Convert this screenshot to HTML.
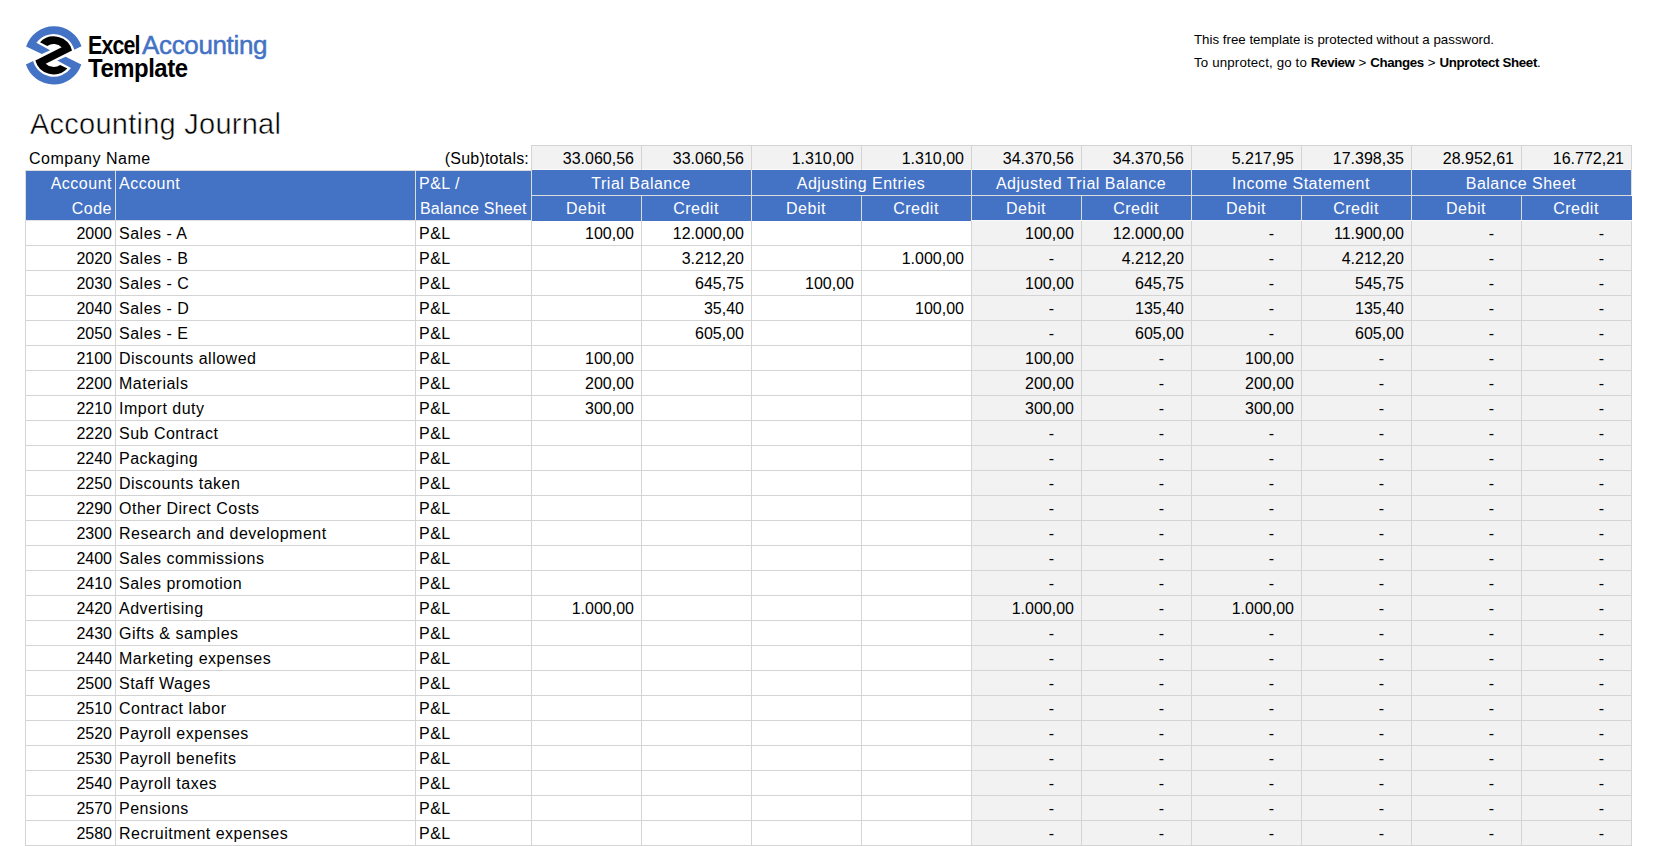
<!DOCTYPE html>
<html><head><meta charset="utf-8"><style>
html,body{margin:0;padding:0;background:#fff;width:1657px;height:846px;overflow:hidden;position:relative}
.b{position:absolute}
.t{position:absolute;font-family:"Liberation Sans", sans-serif;font-size:16px;line-height:25px;height:25px;white-space:nowrap;color:#000;letter-spacing:0.5px}
.n{letter-spacing:0}
.w{color:#fff}
.title{position:absolute;font-family:"Liberation Sans", sans-serif;font-size:29px;line-height:34px;white-space:nowrap;color:#000;letter-spacing:0.25px;-webkit-text-stroke:0.5px #fff}
.note{position:absolute;font-family:"Liberation Sans", sans-serif;font-size:13.3px;line-height:20px;white-space:nowrap;color:#000}
.note b{letter-spacing:-0.35px}
.logo{position:absolute;font-family:"Liberation Sans", sans-serif;white-space:nowrap}
</style></head><body>
<svg style="position:absolute;left:0;top:0" width="100" height="100" viewBox="-53.7 -55.4 100 100">
  <path fill="#4472c4" d="M-27.6,-9.0 A29.2,29.2 0 0 1 27.8,-9.2 L20.6,-5.6 A21.4,21.4 0 0 0 -17.3,-12.6 L-3.6,-5.2 L-11.9,-1.4 Z"/>
  <path fill="#4472c4" transform="rotate(180)" d="M-27.6,-9.0 A29.2,29.2 0 0 1 27.8,-9.2 L20.6,-5.6 A21.4,21.4 0 0 0 -17.3,-12.6 L-3.6,-5.2 L-11.9,-1.4 Z"/>
  <path fill="#000" d="M-13.67,-13.2 A19,19 0 0 1 18.33,-5.01 L-7.99,8.27 A11.5,11.5 0 0 0 6.46,9.51 L13.67,13.2 A19,19 0 0 1 -18.33,5.01 L7.99,-8.27 A11.5,11.5 0 0 0 -6.46,-9.51 Z"/>
</svg>
<div class="logo" style="left:88px;top:32px;font-size:26px;line-height:26px;font-weight:700;color:#000;letter-spacing:-1px;transform:scaleX(0.82);transform-origin:0 0">Excel</div>
<div class="logo" style="left:142px;top:32px;font-size:26px;line-height:26px;font-weight:400;color:#4472c4;letter-spacing:-0.35px;-webkit-text-stroke:0.5px #4472c4">Accounting</div>
<div class="logo" style="left:88px;top:55px;font-size:26px;line-height:26px;font-weight:700;color:#000;letter-spacing:-0.5px;transform:scaleX(0.92);transform-origin:0 0">Template</div>
<div class="title" style="left:30px;top:107px">Accounting Journal</div>
<div class="t" style="left:29px;top:146px">Company Name</div>
<div class="note" style="left:1194px;top:30px">This free template is protected without a password.</div>
<div class="note" style="left:1194px;top:53px;letter-spacing:0.15px">To unprotect, go to <b>Review</b> &gt; <b>Changes</b> &gt; <b>Unprotect Sheet</b>.</div>
<div class="b" style="left:531px;top:145px;width:1100px;height:24px;background:#f2f2f2"></div>
<div class="b" style="left:531px;top:169px;width:1100px;height:1px;background:#fafafa"></div>
<div class="b" style="left:971px;top:220px;width:660px;height:626px;background:#f2f2f2"></div>
<div class="b" style="left:25px;top:171px;width:506px;height:49px;background:#4472c4"></div>
<div class="b" style="left:25px;top:220px;width:506px;height:1px;background:#e2e2e2"></div>
<div class="b" style="left:531px;top:170px;width:440px;height:51px;background:#4472c4"></div>
<div class="b" style="left:971px;top:170px;width:660px;height:50px;background:#4472c4"></div>
<div class="b" style="left:971px;top:220px;width:660px;height:1px;background:#fafafa"></div>
<div class="b" style="left:25px;top:245px;width:1607px;height:1px;background:#d4d4d4"></div>
<div class="b" style="left:25px;top:270px;width:1607px;height:1px;background:#d4d4d4"></div>
<div class="b" style="left:25px;top:295px;width:1607px;height:1px;background:#d4d4d4"></div>
<div class="b" style="left:25px;top:320px;width:1607px;height:1px;background:#d4d4d4"></div>
<div class="b" style="left:25px;top:345px;width:1607px;height:1px;background:#d4d4d4"></div>
<div class="b" style="left:25px;top:370px;width:1607px;height:1px;background:#d4d4d4"></div>
<div class="b" style="left:25px;top:395px;width:1607px;height:1px;background:#d4d4d4"></div>
<div class="b" style="left:25px;top:420px;width:1607px;height:1px;background:#d4d4d4"></div>
<div class="b" style="left:25px;top:445px;width:1607px;height:1px;background:#d4d4d4"></div>
<div class="b" style="left:25px;top:470px;width:1607px;height:1px;background:#d4d4d4"></div>
<div class="b" style="left:25px;top:495px;width:1607px;height:1px;background:#d4d4d4"></div>
<div class="b" style="left:25px;top:520px;width:1607px;height:1px;background:#d4d4d4"></div>
<div class="b" style="left:25px;top:545px;width:1607px;height:1px;background:#d4d4d4"></div>
<div class="b" style="left:25px;top:570px;width:1607px;height:1px;background:#d4d4d4"></div>
<div class="b" style="left:25px;top:595px;width:1607px;height:1px;background:#d4d4d4"></div>
<div class="b" style="left:25px;top:620px;width:1607px;height:1px;background:#d4d4d4"></div>
<div class="b" style="left:25px;top:645px;width:1607px;height:1px;background:#d4d4d4"></div>
<div class="b" style="left:25px;top:670px;width:1607px;height:1px;background:#d4d4d4"></div>
<div class="b" style="left:25px;top:695px;width:1607px;height:1px;background:#d4d4d4"></div>
<div class="b" style="left:25px;top:720px;width:1607px;height:1px;background:#d4d4d4"></div>
<div class="b" style="left:25px;top:745px;width:1607px;height:1px;background:#d4d4d4"></div>
<div class="b" style="left:25px;top:770px;width:1607px;height:1px;background:#d4d4d4"></div>
<div class="b" style="left:25px;top:795px;width:1607px;height:1px;background:#d4d4d4"></div>
<div class="b" style="left:25px;top:820px;width:1607px;height:1px;background:#d4d4d4"></div>
<div class="b" style="left:25px;top:845px;width:1607px;height:1px;background:#d4d4d4"></div>
<div class="b" style="left:25px;top:220px;width:1px;height:626px;background:#d4d4d4"></div>
<div class="b" style="left:115px;top:220px;width:1px;height:626px;background:#d4d4d4"></div>
<div class="b" style="left:415px;top:220px;width:1px;height:626px;background:#d4d4d4"></div>
<div class="b" style="left:531px;top:220px;width:1px;height:626px;background:#d4d4d4"></div>
<div class="b" style="left:641px;top:220px;width:1px;height:626px;background:#d4d4d4"></div>
<div class="b" style="left:751px;top:220px;width:1px;height:626px;background:#d4d4d4"></div>
<div class="b" style="left:861px;top:220px;width:1px;height:626px;background:#d4d4d4"></div>
<div class="b" style="left:971px;top:221px;width:1px;height:626px;background:#d4d4d4"></div>
<div class="b" style="left:1081px;top:221px;width:1px;height:626px;background:#d4d4d4"></div>
<div class="b" style="left:1191px;top:221px;width:1px;height:626px;background:#d4d4d4"></div>
<div class="b" style="left:1301px;top:221px;width:1px;height:626px;background:#d4d4d4"></div>
<div class="b" style="left:1411px;top:221px;width:1px;height:626px;background:#d4d4d4"></div>
<div class="b" style="left:1521px;top:221px;width:1px;height:626px;background:#d4d4d4"></div>
<div class="b" style="left:1631px;top:221px;width:1px;height:626px;background:#d4d4d4"></div>
<div class="b" style="left:531px;top:145px;width:1101px;height:1px;background:#d4d4d4"></div>
<div class="b" style="left:531px;top:145px;width:1px;height:25px;background:#d4d4d4"></div>
<div class="b" style="left:641px;top:145px;width:1px;height:25px;background:#d4d4d4"></div>
<div class="b" style="left:751px;top:145px;width:1px;height:25px;background:#d4d4d4"></div>
<div class="b" style="left:861px;top:145px;width:1px;height:25px;background:#d4d4d4"></div>
<div class="b" style="left:971px;top:145px;width:1px;height:25px;background:#d4d4d4"></div>
<div class="b" style="left:1081px;top:145px;width:1px;height:25px;background:#d4d4d4"></div>
<div class="b" style="left:1191px;top:145px;width:1px;height:25px;background:#d4d4d4"></div>
<div class="b" style="left:1301px;top:145px;width:1px;height:25px;background:#d4d4d4"></div>
<div class="b" style="left:1411px;top:145px;width:1px;height:25px;background:#d4d4d4"></div>
<div class="b" style="left:1521px;top:145px;width:1px;height:25px;background:#d4d4d4"></div>
<div class="b" style="left:1631px;top:145px;width:1px;height:25px;background:#d4d4d4"></div>
<div class="b" style="left:115px;top:170px;width:1px;height:50px;background:#dcdcdc"></div>
<div class="b" style="left:415px;top:170px;width:1px;height:50px;background:#dcdcdc"></div>
<div class="b" style="left:531px;top:170px;width:1px;height:50px;background:#dcdcdc"></div>
<div class="b" style="left:751px;top:170px;width:1px;height:50px;background:#dcdcdc"></div>
<div class="b" style="left:971px;top:170px;width:1px;height:50px;background:#dcdcdc"></div>
<div class="b" style="left:1191px;top:170px;width:1px;height:50px;background:#dcdcdc"></div>
<div class="b" style="left:1411px;top:170px;width:1px;height:50px;background:#dcdcdc"></div>
<div class="b" style="left:641px;top:196px;width:1px;height:24px;background:#dcdcdc"></div>
<div class="b" style="left:861px;top:196px;width:1px;height:24px;background:#dcdcdc"></div>
<div class="b" style="left:1081px;top:196px;width:1px;height:24px;background:#dcdcdc"></div>
<div class="b" style="left:1301px;top:196px;width:1px;height:24px;background:#dcdcdc"></div>
<div class="b" style="left:1521px;top:196px;width:1px;height:24px;background:#dcdcdc"></div>
<div class="b" style="left:531px;top:195px;width:1100px;height:1px;background:#dcdcdc"></div>
<div class="b" style="left:25px;top:170px;width:506px;height:1px;background:#dcdcdc"></div>
<div class="b" style="left:1631px;top:170px;width:1px;height:25px;background:#dcdcdc"></div>
<div class="b" style="left:1631px;top:196px;width:1px;height:24px;background:#4472c4"></div>
<div class="b" style="left:25px;top:170px;width:1px;height:51px;background:#dcdcdc"></div>
<div class="t" style="left:415px;top:146px;width:114px;text-align:right;letter-spacing:0.2px">(Sub)totals:</div>
<div class="t n g" style="left:531px;top:146px;width:103px;text-align:right;">33.060,56</div>
<div class="t n g" style="left:641px;top:146px;width:103px;text-align:right;">33.060,56</div>
<div class="t n g" style="left:751px;top:146px;width:103px;text-align:right;">1.310,00</div>
<div class="t n g" style="left:861px;top:146px;width:103px;text-align:right;">1.310,00</div>
<div class="t n g" style="left:971px;top:146px;width:103px;text-align:right;">34.370,56</div>
<div class="t n g" style="left:1081px;top:146px;width:103px;text-align:right;">34.370,56</div>
<div class="t n g" style="left:1191px;top:146px;width:103px;text-align:right;">5.217,95</div>
<div class="t n g" style="left:1301px;top:146px;width:103px;text-align:right;">17.398,35</div>
<div class="t n g" style="left:1411px;top:146px;width:103px;text-align:right;">28.952,61</div>
<div class="t n g" style="left:1521px;top:146px;width:103px;text-align:right;">16.772,21</div>
<div class="t w" style="left:25px;top:171px;width:87px;text-align:right;">Account</div>
<div class="t w" style="left:25px;top:196px;width:87px;text-align:right;">Code</div>
<div class="t w" style="left:119px;top:171px;width:290px;text-align:left;">Account</div>
<div class="t w" style="left:419px;top:171px;width:110px;text-align:left;">P&amp;L /</div>
<div class="t w" style="left:420px;top:196px;width:112px;text-align:left;letter-spacing:0.2px">Balance Sheet</div>
<div class="t w" style="left:531px;top:171px;width:220px;text-align:center;">Trial Balance</div>
<div class="t w" style="left:531px;top:196px;width:110px;text-align:center;">Debit</div>
<div class="t w" style="left:641px;top:196px;width:110px;text-align:center;">Credit</div>
<div class="t w" style="left:751px;top:171px;width:220px;text-align:center;">Adjusting Entries</div>
<div class="t w" style="left:751px;top:196px;width:110px;text-align:center;">Debit</div>
<div class="t w" style="left:861px;top:196px;width:110px;text-align:center;">Credit</div>
<div class="t w" style="left:971px;top:171px;width:220px;text-align:center;">Adjusted Trial Balance</div>
<div class="t w" style="left:971px;top:196px;width:110px;text-align:center;">Debit</div>
<div class="t w" style="left:1081px;top:196px;width:110px;text-align:center;">Credit</div>
<div class="t w" style="left:1191px;top:171px;width:220px;text-align:center;">Income Statement</div>
<div class="t w" style="left:1191px;top:196px;width:110px;text-align:center;">Debit</div>
<div class="t w" style="left:1301px;top:196px;width:110px;text-align:center;">Credit</div>
<div class="t w" style="left:1411px;top:171px;width:220px;text-align:center;">Balance Sheet</div>
<div class="t w" style="left:1411px;top:196px;width:110px;text-align:center;">Debit</div>
<div class="t w" style="left:1521px;top:196px;width:110px;text-align:center;">Credit</div>
<div class="t n" style="left:25px;top:221px;width:87px;text-align:right;">2000</div>
<div class="t" style="left:119px;top:221px;width:290px;text-align:left;">Sales - A</div>
<div class="t" style="left:419px;top:221px;width:110px;text-align:left;">P&amp;L</div>
<div class="t n" style="left:531px;top:221px;width:103px;text-align:right;">100,00</div>
<div class="t n" style="left:641px;top:221px;width:103px;text-align:right;">12.000,00</div>
<div class="t n g" style="left:971px;top:221px;width:103px;text-align:right;">100,00</div>
<div class="t n g" style="left:1081px;top:221px;width:103px;text-align:right;">12.000,00</div>
<div class="t n g" style="left:1191px;top:221px;width:83px;text-align:right;">-</div>
<div class="t n g" style="left:1301px;top:221px;width:103px;text-align:right;">11.900,00</div>
<div class="t n g" style="left:1411px;top:221px;width:83px;text-align:right;">-</div>
<div class="t n g" style="left:1521px;top:221px;width:83px;text-align:right;">-</div>
<div class="t n" style="left:25px;top:246px;width:87px;text-align:right;">2020</div>
<div class="t" style="left:119px;top:246px;width:290px;text-align:left;">Sales - B</div>
<div class="t" style="left:419px;top:246px;width:110px;text-align:left;">P&amp;L</div>
<div class="t n" style="left:641px;top:246px;width:103px;text-align:right;">3.212,20</div>
<div class="t n" style="left:861px;top:246px;width:103px;text-align:right;">1.000,00</div>
<div class="t n g" style="left:971px;top:246px;width:83px;text-align:right;">-</div>
<div class="t n g" style="left:1081px;top:246px;width:103px;text-align:right;">4.212,20</div>
<div class="t n g" style="left:1191px;top:246px;width:83px;text-align:right;">-</div>
<div class="t n g" style="left:1301px;top:246px;width:103px;text-align:right;">4.212,20</div>
<div class="t n g" style="left:1411px;top:246px;width:83px;text-align:right;">-</div>
<div class="t n g" style="left:1521px;top:246px;width:83px;text-align:right;">-</div>
<div class="t n" style="left:25px;top:271px;width:87px;text-align:right;">2030</div>
<div class="t" style="left:119px;top:271px;width:290px;text-align:left;">Sales - C</div>
<div class="t" style="left:419px;top:271px;width:110px;text-align:left;">P&amp;L</div>
<div class="t n" style="left:641px;top:271px;width:103px;text-align:right;">645,75</div>
<div class="t n" style="left:751px;top:271px;width:103px;text-align:right;">100,00</div>
<div class="t n g" style="left:971px;top:271px;width:103px;text-align:right;">100,00</div>
<div class="t n g" style="left:1081px;top:271px;width:103px;text-align:right;">645,75</div>
<div class="t n g" style="left:1191px;top:271px;width:83px;text-align:right;">-</div>
<div class="t n g" style="left:1301px;top:271px;width:103px;text-align:right;">545,75</div>
<div class="t n g" style="left:1411px;top:271px;width:83px;text-align:right;">-</div>
<div class="t n g" style="left:1521px;top:271px;width:83px;text-align:right;">-</div>
<div class="t n" style="left:25px;top:296px;width:87px;text-align:right;">2040</div>
<div class="t" style="left:119px;top:296px;width:290px;text-align:left;">Sales - D</div>
<div class="t" style="left:419px;top:296px;width:110px;text-align:left;">P&amp;L</div>
<div class="t n" style="left:641px;top:296px;width:103px;text-align:right;">35,40</div>
<div class="t n" style="left:861px;top:296px;width:103px;text-align:right;">100,00</div>
<div class="t n g" style="left:971px;top:296px;width:83px;text-align:right;">-</div>
<div class="t n g" style="left:1081px;top:296px;width:103px;text-align:right;">135,40</div>
<div class="t n g" style="left:1191px;top:296px;width:83px;text-align:right;">-</div>
<div class="t n g" style="left:1301px;top:296px;width:103px;text-align:right;">135,40</div>
<div class="t n g" style="left:1411px;top:296px;width:83px;text-align:right;">-</div>
<div class="t n g" style="left:1521px;top:296px;width:83px;text-align:right;">-</div>
<div class="t n" style="left:25px;top:321px;width:87px;text-align:right;">2050</div>
<div class="t" style="left:119px;top:321px;width:290px;text-align:left;">Sales - E</div>
<div class="t" style="left:419px;top:321px;width:110px;text-align:left;">P&amp;L</div>
<div class="t n" style="left:641px;top:321px;width:103px;text-align:right;">605,00</div>
<div class="t n g" style="left:971px;top:321px;width:83px;text-align:right;">-</div>
<div class="t n g" style="left:1081px;top:321px;width:103px;text-align:right;">605,00</div>
<div class="t n g" style="left:1191px;top:321px;width:83px;text-align:right;">-</div>
<div class="t n g" style="left:1301px;top:321px;width:103px;text-align:right;">605,00</div>
<div class="t n g" style="left:1411px;top:321px;width:83px;text-align:right;">-</div>
<div class="t n g" style="left:1521px;top:321px;width:83px;text-align:right;">-</div>
<div class="t n" style="left:25px;top:346px;width:87px;text-align:right;">2100</div>
<div class="t" style="left:119px;top:346px;width:290px;text-align:left;">Discounts allowed</div>
<div class="t" style="left:419px;top:346px;width:110px;text-align:left;">P&amp;L</div>
<div class="t n" style="left:531px;top:346px;width:103px;text-align:right;">100,00</div>
<div class="t n g" style="left:971px;top:346px;width:103px;text-align:right;">100,00</div>
<div class="t n g" style="left:1081px;top:346px;width:83px;text-align:right;">-</div>
<div class="t n g" style="left:1191px;top:346px;width:103px;text-align:right;">100,00</div>
<div class="t n g" style="left:1301px;top:346px;width:83px;text-align:right;">-</div>
<div class="t n g" style="left:1411px;top:346px;width:83px;text-align:right;">-</div>
<div class="t n g" style="left:1521px;top:346px;width:83px;text-align:right;">-</div>
<div class="t n" style="left:25px;top:371px;width:87px;text-align:right;">2200</div>
<div class="t" style="left:119px;top:371px;width:290px;text-align:left;">Materials</div>
<div class="t" style="left:419px;top:371px;width:110px;text-align:left;">P&amp;L</div>
<div class="t n" style="left:531px;top:371px;width:103px;text-align:right;">200,00</div>
<div class="t n g" style="left:971px;top:371px;width:103px;text-align:right;">200,00</div>
<div class="t n g" style="left:1081px;top:371px;width:83px;text-align:right;">-</div>
<div class="t n g" style="left:1191px;top:371px;width:103px;text-align:right;">200,00</div>
<div class="t n g" style="left:1301px;top:371px;width:83px;text-align:right;">-</div>
<div class="t n g" style="left:1411px;top:371px;width:83px;text-align:right;">-</div>
<div class="t n g" style="left:1521px;top:371px;width:83px;text-align:right;">-</div>
<div class="t n" style="left:25px;top:396px;width:87px;text-align:right;">2210</div>
<div class="t" style="left:119px;top:396px;width:290px;text-align:left;">Import duty</div>
<div class="t" style="left:419px;top:396px;width:110px;text-align:left;">P&amp;L</div>
<div class="t n" style="left:531px;top:396px;width:103px;text-align:right;">300,00</div>
<div class="t n g" style="left:971px;top:396px;width:103px;text-align:right;">300,00</div>
<div class="t n g" style="left:1081px;top:396px;width:83px;text-align:right;">-</div>
<div class="t n g" style="left:1191px;top:396px;width:103px;text-align:right;">300,00</div>
<div class="t n g" style="left:1301px;top:396px;width:83px;text-align:right;">-</div>
<div class="t n g" style="left:1411px;top:396px;width:83px;text-align:right;">-</div>
<div class="t n g" style="left:1521px;top:396px;width:83px;text-align:right;">-</div>
<div class="t n" style="left:25px;top:421px;width:87px;text-align:right;">2220</div>
<div class="t" style="left:119px;top:421px;width:290px;text-align:left;">Sub Contract</div>
<div class="t" style="left:419px;top:421px;width:110px;text-align:left;">P&amp;L</div>
<div class="t n g" style="left:971px;top:421px;width:83px;text-align:right;">-</div>
<div class="t n g" style="left:1081px;top:421px;width:83px;text-align:right;">-</div>
<div class="t n g" style="left:1191px;top:421px;width:83px;text-align:right;">-</div>
<div class="t n g" style="left:1301px;top:421px;width:83px;text-align:right;">-</div>
<div class="t n g" style="left:1411px;top:421px;width:83px;text-align:right;">-</div>
<div class="t n g" style="left:1521px;top:421px;width:83px;text-align:right;">-</div>
<div class="t n" style="left:25px;top:446px;width:87px;text-align:right;">2240</div>
<div class="t" style="left:119px;top:446px;width:290px;text-align:left;">Packaging</div>
<div class="t" style="left:419px;top:446px;width:110px;text-align:left;">P&amp;L</div>
<div class="t n g" style="left:971px;top:446px;width:83px;text-align:right;">-</div>
<div class="t n g" style="left:1081px;top:446px;width:83px;text-align:right;">-</div>
<div class="t n g" style="left:1191px;top:446px;width:83px;text-align:right;">-</div>
<div class="t n g" style="left:1301px;top:446px;width:83px;text-align:right;">-</div>
<div class="t n g" style="left:1411px;top:446px;width:83px;text-align:right;">-</div>
<div class="t n g" style="left:1521px;top:446px;width:83px;text-align:right;">-</div>
<div class="t n" style="left:25px;top:471px;width:87px;text-align:right;">2250</div>
<div class="t" style="left:119px;top:471px;width:290px;text-align:left;">Discounts taken</div>
<div class="t" style="left:419px;top:471px;width:110px;text-align:left;">P&amp;L</div>
<div class="t n g" style="left:971px;top:471px;width:83px;text-align:right;">-</div>
<div class="t n g" style="left:1081px;top:471px;width:83px;text-align:right;">-</div>
<div class="t n g" style="left:1191px;top:471px;width:83px;text-align:right;">-</div>
<div class="t n g" style="left:1301px;top:471px;width:83px;text-align:right;">-</div>
<div class="t n g" style="left:1411px;top:471px;width:83px;text-align:right;">-</div>
<div class="t n g" style="left:1521px;top:471px;width:83px;text-align:right;">-</div>
<div class="t n" style="left:25px;top:496px;width:87px;text-align:right;">2290</div>
<div class="t" style="left:119px;top:496px;width:290px;text-align:left;">Other Direct Costs</div>
<div class="t" style="left:419px;top:496px;width:110px;text-align:left;">P&amp;L</div>
<div class="t n g" style="left:971px;top:496px;width:83px;text-align:right;">-</div>
<div class="t n g" style="left:1081px;top:496px;width:83px;text-align:right;">-</div>
<div class="t n g" style="left:1191px;top:496px;width:83px;text-align:right;">-</div>
<div class="t n g" style="left:1301px;top:496px;width:83px;text-align:right;">-</div>
<div class="t n g" style="left:1411px;top:496px;width:83px;text-align:right;">-</div>
<div class="t n g" style="left:1521px;top:496px;width:83px;text-align:right;">-</div>
<div class="t n" style="left:25px;top:521px;width:87px;text-align:right;">2300</div>
<div class="t" style="left:119px;top:521px;width:290px;text-align:left;">Research and development</div>
<div class="t" style="left:419px;top:521px;width:110px;text-align:left;">P&amp;L</div>
<div class="t n g" style="left:971px;top:521px;width:83px;text-align:right;">-</div>
<div class="t n g" style="left:1081px;top:521px;width:83px;text-align:right;">-</div>
<div class="t n g" style="left:1191px;top:521px;width:83px;text-align:right;">-</div>
<div class="t n g" style="left:1301px;top:521px;width:83px;text-align:right;">-</div>
<div class="t n g" style="left:1411px;top:521px;width:83px;text-align:right;">-</div>
<div class="t n g" style="left:1521px;top:521px;width:83px;text-align:right;">-</div>
<div class="t n" style="left:25px;top:546px;width:87px;text-align:right;">2400</div>
<div class="t" style="left:119px;top:546px;width:290px;text-align:left;">Sales commissions</div>
<div class="t" style="left:419px;top:546px;width:110px;text-align:left;">P&amp;L</div>
<div class="t n g" style="left:971px;top:546px;width:83px;text-align:right;">-</div>
<div class="t n g" style="left:1081px;top:546px;width:83px;text-align:right;">-</div>
<div class="t n g" style="left:1191px;top:546px;width:83px;text-align:right;">-</div>
<div class="t n g" style="left:1301px;top:546px;width:83px;text-align:right;">-</div>
<div class="t n g" style="left:1411px;top:546px;width:83px;text-align:right;">-</div>
<div class="t n g" style="left:1521px;top:546px;width:83px;text-align:right;">-</div>
<div class="t n" style="left:25px;top:571px;width:87px;text-align:right;">2410</div>
<div class="t" style="left:119px;top:571px;width:290px;text-align:left;">Sales promotion</div>
<div class="t" style="left:419px;top:571px;width:110px;text-align:left;">P&amp;L</div>
<div class="t n g" style="left:971px;top:571px;width:83px;text-align:right;">-</div>
<div class="t n g" style="left:1081px;top:571px;width:83px;text-align:right;">-</div>
<div class="t n g" style="left:1191px;top:571px;width:83px;text-align:right;">-</div>
<div class="t n g" style="left:1301px;top:571px;width:83px;text-align:right;">-</div>
<div class="t n g" style="left:1411px;top:571px;width:83px;text-align:right;">-</div>
<div class="t n g" style="left:1521px;top:571px;width:83px;text-align:right;">-</div>
<div class="t n" style="left:25px;top:596px;width:87px;text-align:right;">2420</div>
<div class="t" style="left:119px;top:596px;width:290px;text-align:left;">Advertising</div>
<div class="t" style="left:419px;top:596px;width:110px;text-align:left;">P&amp;L</div>
<div class="t n" style="left:531px;top:596px;width:103px;text-align:right;">1.000,00</div>
<div class="t n g" style="left:971px;top:596px;width:103px;text-align:right;">1.000,00</div>
<div class="t n g" style="left:1081px;top:596px;width:83px;text-align:right;">-</div>
<div class="t n g" style="left:1191px;top:596px;width:103px;text-align:right;">1.000,00</div>
<div class="t n g" style="left:1301px;top:596px;width:83px;text-align:right;">-</div>
<div class="t n g" style="left:1411px;top:596px;width:83px;text-align:right;">-</div>
<div class="t n g" style="left:1521px;top:596px;width:83px;text-align:right;">-</div>
<div class="t n" style="left:25px;top:621px;width:87px;text-align:right;">2430</div>
<div class="t" style="left:119px;top:621px;width:290px;text-align:left;">Gifts &amp; samples</div>
<div class="t" style="left:419px;top:621px;width:110px;text-align:left;">P&amp;L</div>
<div class="t n g" style="left:971px;top:621px;width:83px;text-align:right;">-</div>
<div class="t n g" style="left:1081px;top:621px;width:83px;text-align:right;">-</div>
<div class="t n g" style="left:1191px;top:621px;width:83px;text-align:right;">-</div>
<div class="t n g" style="left:1301px;top:621px;width:83px;text-align:right;">-</div>
<div class="t n g" style="left:1411px;top:621px;width:83px;text-align:right;">-</div>
<div class="t n g" style="left:1521px;top:621px;width:83px;text-align:right;">-</div>
<div class="t n" style="left:25px;top:646px;width:87px;text-align:right;">2440</div>
<div class="t" style="left:119px;top:646px;width:290px;text-align:left;">Marketing expenses</div>
<div class="t" style="left:419px;top:646px;width:110px;text-align:left;">P&amp;L</div>
<div class="t n g" style="left:971px;top:646px;width:83px;text-align:right;">-</div>
<div class="t n g" style="left:1081px;top:646px;width:83px;text-align:right;">-</div>
<div class="t n g" style="left:1191px;top:646px;width:83px;text-align:right;">-</div>
<div class="t n g" style="left:1301px;top:646px;width:83px;text-align:right;">-</div>
<div class="t n g" style="left:1411px;top:646px;width:83px;text-align:right;">-</div>
<div class="t n g" style="left:1521px;top:646px;width:83px;text-align:right;">-</div>
<div class="t n" style="left:25px;top:671px;width:87px;text-align:right;">2500</div>
<div class="t" style="left:119px;top:671px;width:290px;text-align:left;">Staff Wages</div>
<div class="t" style="left:419px;top:671px;width:110px;text-align:left;">P&amp;L</div>
<div class="t n g" style="left:971px;top:671px;width:83px;text-align:right;">-</div>
<div class="t n g" style="left:1081px;top:671px;width:83px;text-align:right;">-</div>
<div class="t n g" style="left:1191px;top:671px;width:83px;text-align:right;">-</div>
<div class="t n g" style="left:1301px;top:671px;width:83px;text-align:right;">-</div>
<div class="t n g" style="left:1411px;top:671px;width:83px;text-align:right;">-</div>
<div class="t n g" style="left:1521px;top:671px;width:83px;text-align:right;">-</div>
<div class="t n" style="left:25px;top:696px;width:87px;text-align:right;">2510</div>
<div class="t" style="left:119px;top:696px;width:290px;text-align:left;">Contract labor</div>
<div class="t" style="left:419px;top:696px;width:110px;text-align:left;">P&amp;L</div>
<div class="t n g" style="left:971px;top:696px;width:83px;text-align:right;">-</div>
<div class="t n g" style="left:1081px;top:696px;width:83px;text-align:right;">-</div>
<div class="t n g" style="left:1191px;top:696px;width:83px;text-align:right;">-</div>
<div class="t n g" style="left:1301px;top:696px;width:83px;text-align:right;">-</div>
<div class="t n g" style="left:1411px;top:696px;width:83px;text-align:right;">-</div>
<div class="t n g" style="left:1521px;top:696px;width:83px;text-align:right;">-</div>
<div class="t n" style="left:25px;top:721px;width:87px;text-align:right;">2520</div>
<div class="t" style="left:119px;top:721px;width:290px;text-align:left;">Payroll expenses</div>
<div class="t" style="left:419px;top:721px;width:110px;text-align:left;">P&amp;L</div>
<div class="t n g" style="left:971px;top:721px;width:83px;text-align:right;">-</div>
<div class="t n g" style="left:1081px;top:721px;width:83px;text-align:right;">-</div>
<div class="t n g" style="left:1191px;top:721px;width:83px;text-align:right;">-</div>
<div class="t n g" style="left:1301px;top:721px;width:83px;text-align:right;">-</div>
<div class="t n g" style="left:1411px;top:721px;width:83px;text-align:right;">-</div>
<div class="t n g" style="left:1521px;top:721px;width:83px;text-align:right;">-</div>
<div class="t n" style="left:25px;top:746px;width:87px;text-align:right;">2530</div>
<div class="t" style="left:119px;top:746px;width:290px;text-align:left;">Payroll benefits</div>
<div class="t" style="left:419px;top:746px;width:110px;text-align:left;">P&amp;L</div>
<div class="t n g" style="left:971px;top:746px;width:83px;text-align:right;">-</div>
<div class="t n g" style="left:1081px;top:746px;width:83px;text-align:right;">-</div>
<div class="t n g" style="left:1191px;top:746px;width:83px;text-align:right;">-</div>
<div class="t n g" style="left:1301px;top:746px;width:83px;text-align:right;">-</div>
<div class="t n g" style="left:1411px;top:746px;width:83px;text-align:right;">-</div>
<div class="t n g" style="left:1521px;top:746px;width:83px;text-align:right;">-</div>
<div class="t n" style="left:25px;top:771px;width:87px;text-align:right;">2540</div>
<div class="t" style="left:119px;top:771px;width:290px;text-align:left;">Payroll taxes</div>
<div class="t" style="left:419px;top:771px;width:110px;text-align:left;">P&amp;L</div>
<div class="t n g" style="left:971px;top:771px;width:83px;text-align:right;">-</div>
<div class="t n g" style="left:1081px;top:771px;width:83px;text-align:right;">-</div>
<div class="t n g" style="left:1191px;top:771px;width:83px;text-align:right;">-</div>
<div class="t n g" style="left:1301px;top:771px;width:83px;text-align:right;">-</div>
<div class="t n g" style="left:1411px;top:771px;width:83px;text-align:right;">-</div>
<div class="t n g" style="left:1521px;top:771px;width:83px;text-align:right;">-</div>
<div class="t n" style="left:25px;top:796px;width:87px;text-align:right;">2570</div>
<div class="t" style="left:119px;top:796px;width:290px;text-align:left;">Pensions</div>
<div class="t" style="left:419px;top:796px;width:110px;text-align:left;">P&amp;L</div>
<div class="t n g" style="left:971px;top:796px;width:83px;text-align:right;">-</div>
<div class="t n g" style="left:1081px;top:796px;width:83px;text-align:right;">-</div>
<div class="t n g" style="left:1191px;top:796px;width:83px;text-align:right;">-</div>
<div class="t n g" style="left:1301px;top:796px;width:83px;text-align:right;">-</div>
<div class="t n g" style="left:1411px;top:796px;width:83px;text-align:right;">-</div>
<div class="t n g" style="left:1521px;top:796px;width:83px;text-align:right;">-</div>
<div class="t n" style="left:25px;top:821px;width:87px;text-align:right;">2580</div>
<div class="t" style="left:119px;top:821px;width:290px;text-align:left;">Recruitment expenses</div>
<div class="t" style="left:419px;top:821px;width:110px;text-align:left;">P&amp;L</div>
<div class="t n g" style="left:971px;top:821px;width:83px;text-align:right;">-</div>
<div class="t n g" style="left:1081px;top:821px;width:83px;text-align:right;">-</div>
<div class="t n g" style="left:1191px;top:821px;width:83px;text-align:right;">-</div>
<div class="t n g" style="left:1301px;top:821px;width:83px;text-align:right;">-</div>
<div class="t n g" style="left:1411px;top:821px;width:83px;text-align:right;">-</div>
<div class="t n g" style="left:1521px;top:821px;width:83px;text-align:right;">-</div>
</body></html>
